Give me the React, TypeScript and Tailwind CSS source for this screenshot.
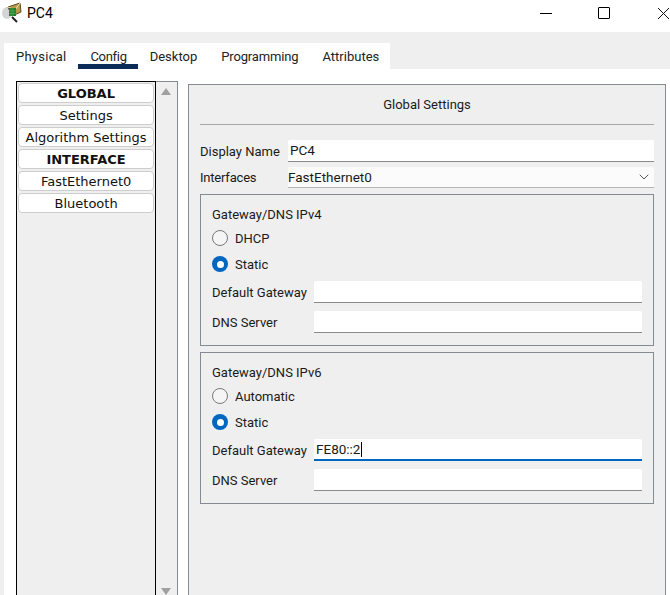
import { ChevronDown } from 'lucide-react'

const sideItems = [
  { label: 'GLOBAL', bold: true },
  { label: 'Settings' },
  { label: 'Algorithm Settings' },
  { label: 'INTERFACE', bold: true },
  { label: 'FastEthernet0' },
  { label: 'Bluetooth' },
]

function AppIcon() {
  return (
    <svg width="22" height="24" viewBox="0 0 22 24" className="absolute left-0 top-0">
      <ellipse cx="7" cy="13" rx="5" ry="6" fill="#d3d6d6" />
      <path d="M8 7 L20 3 L21 12 L12 16 Z" fill="#b99a4a" stroke="#5b4a1e" strokeWidth="1" />
      <path d="M8 7 L15 10 L20 3" fill="none" stroke="#f3e6b0" strokeWidth="1" />
      <rect x="9" y="8" width="7" height="8" fill="#1f7a2c" />
      <path d="M11 8v8M13 8v8M9 11h7M9 13.5h7" stroke="#63b25f" strokeWidth="0.6" />
      <path d="M12 17 L17 22" stroke="#222" strokeWidth="2" />
    </svg>
  )
}

function Radio({ checked, label }: { checked?: boolean; label: string }) {
  return (
    <div className="flex h-[26px] items-center">
      {checked ? (
        <span className="flex h-4 w-4 items-center justify-center rounded-full bg-[#0067c0]">
          <span className="h-[7px] w-[7px] rounded-full bg-white" />
        </span>
      ) : (
        <span className="h-4 w-4 rounded-full border border-[#7a7a7a] bg-[#f5f5f5]" />
      )}
      <span className="ml-[7px] pt-[1px]">{label}</span>
    </div>
  )
}

function GatewayField({ label, value, focused }: { label: string; value?: string; focused?: boolean }) {
  return (
    <div className="flex h-[22px] items-center">
      <span className="w-[102px] shrink-0 pt-[1px]">{label}</span>
      <div
        className={
          focused
            ? 'flex h-[22px] flex-1 items-center rounded-t-[2px] border-b-2 border-[#0067c0] bg-white pl-[2px] text-[13.5px]'
            : 'flex h-[22px] flex-1 items-center rounded-t-[2px] border-b border-[#8a8a8a] bg-white pl-[2px] text-[13.5px]'
        }
      >
        {value}
        {focused && <span className="ml-[1px] h-[15px] w-px bg-black" />}
      </div>
    </div>
  )
}

function GatewayBox({ title, first, gateway }: { title: string; first: string; gateway?: string }) {
  return (
    <div className="h-[152px] border border-[#868a91] px-[11px] pt-[11px]">
      <div className="h-[18px] leading-[18px]">{title}</div>
      <div className="mt-[1px]">
        <Radio label={first} />
        <Radio checked label="Static" />
      </div>
      <div className="mt-[4px] flex flex-col gap-2">
        <GatewayField label="Default Gateway" value={gateway} focused={!!gateway} />
        <GatewayField label="DNS Server" />
      </div>
    </div>
  )
}

export default function App() {
  return (
    <div className="h-[595px] w-[670px] overflow-hidden bg-white font-['Roboto',sans-serif] text-[13px] text-[#1a1a1a]">
      {/* title bar */}
      <div className="relative flex h-8 items-center pb-[6px]">
        <AppIcon />
        <span className="ml-[27px] text-[14px] text-black">PC4</span>
        <div className="ml-auto flex items-center">
          <span className="mr-[46px] h-px w-3 bg-black" />
          <span className="mr-[47px] h-3 w-3 rounded-[1px] border border-black" />
          <svg width="13" height="13" viewBox="0 0 13 13">
            <path d="M1 1 L12 12 M12 1 L1 12" stroke="#111" strokeWidth="1" />
          </svg>
        </div>
      </div>

      {/* tabs */}
      <div className="flex h-[37px] items-end bg-[#efefef] pl-[4px]">
        <div className="flex h-[26px] w-[386px] bg-white pl-[12px] pt-[4px] text-[#222]">
          <span className="tracking-[0.25px]">Physical</span>
          <span className="relative ml-[24px] tracking-[-0.3px]">
            Config
            <span className="absolute -left-[12px] top-[17px] h-[5px] w-[60px] bg-[#0b2c57]" />
          </span>
          <span className="ml-[23px]">Desktop</span>
          <span className="ml-[24px] tracking-[-0.15px]">Programming</span>
          <span className="ml-[24px]">Attributes</span>
        </div>
      </div>

      {/* body */}
      <div className="flex h-[526px]">
        <div className="w-1 bg-[#efefef]" />
        <div className="ml-[12px] mt-[12px] flex h-[514px] w-[162px]">
          <div className="w-[141px] border-x border-t border-black bg-[#efefef] px-[1px] pt-[1px]">
            <div className="flex flex-col gap-[2px] font-['DejaVu_Sans',sans-serif] text-[13px] text-[#111]">
              {sideItems.map((item) => (
                <div
                  key={item.label}
                  className={
                    item.bold
                      ? 'flex h-5 items-center justify-center rounded-[4px] border border-[#cdcdcd] bg-white pt-[1px] font-bold'
                      : 'flex h-5 items-center justify-center rounded-[4px] border border-[#cdcdcd] bg-white pt-[1px]'
                  }
                >
                  {item.label}
                </div>
              ))}
            </div>
          </div>
          <div className="relative w-[22px] border-t border-r border-[#868a91] bg-[#efefef]">
            <span className="absolute left-[5px] top-[6px] h-0 w-0 border-x-[5px] border-b-[7px] border-x-transparent border-b-[#a0a0a0]" />
            <span className="absolute bottom-0 left-[5px] h-0 w-0 border-x-[5px] border-t-[7px] border-x-transparent border-t-[#a0a0a0]" />
          </div>
        </div>

        <div className="ml-[10px] mt-[15px] w-[478px] border-l border-t border-r border-[#868a91] bg-[#efefef] px-[11px]">
          <div className="flex h-[40px] items-center justify-center border-b border-[#a8a8a8] pt-[1px] text-[13px]">
            Global Settings
          </div>
          <div className="mt-[15px] flex h-[22px] items-center">
            <span className="w-[88px] shrink-0 pt-[1px]">Display Name</span>
            <div className="flex h-[22px] flex-1 items-center rounded-t-[2px] border-b border-[#8a8a8a] bg-white pl-[2px] text-[13.5px]">
              PC4
            </div>
          </div>
          <div className="mt-[5px] flex h-[21px] items-center">
            <span className="w-[88px] shrink-0 pt-[1px] tracking-[-0.2px]">Interfaces</span>
            <div className="flex h-[21px] flex-1 items-center justify-between rounded-t-[2px] border-b border-[#b5b5b5] bg-[#fbfbfb] pr-[2px] text-[13.5px]">
              FastEthernet0
              <ChevronDown size={16} strokeWidth={1.25} className="text-[#333]" />
            </div>
          </div>
          <div className="mt-[6px] flex flex-col gap-[6px]">
            <GatewayBox title="Gateway/DNS IPv4" first="DHCP" />
            <GatewayBox title="Gateway/DNS IPv6" first="Automatic" gateway="FE80::2" />
          </div>
        </div>
      </div>
    </div>
  )
}
